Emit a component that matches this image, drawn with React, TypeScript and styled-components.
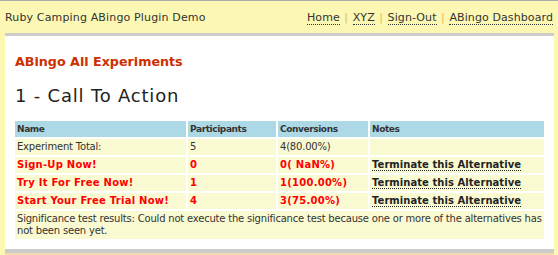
import React from "react";
import styled, { createGlobalStyle } from "styled-components";

const GlobalStyle = createGlobalStyle`
    html, body {
        margin: 0;
        padding: 0;
        background: #fcf8b3;
        font-family: "DejaVu Sans", Verdana, sans-serif;
        color: #333;
    }
`;

type Alternative = {
    name: string;
    participants: number;
    conversions: string;
};

const alternatives: Alternative[] = [
    { name: "Sign-Up Now!", participants: 0, conversions: "0( NaN%)" },
    { name: "Try It For Free Now!", participants: 1, conversions: "1(100.00%)" },
    { name: "Start Your Free Trial Now!", participants: 4, conversions: "3(75.00%)" },
];

const App: React.FunctionComponent = () => {
    return (
        <Page>
            <GlobalStyle />
            <Header>
                <Title>Ruby Camping ABingo Plugin Demo</Title>
                <Nav>
                    <NavLink href="#">Home</NavLink>
                    <Sep>|</Sep>
                    <NavLink href="#">XYZ</NavLink>
                    <Sep>|</Sep>
                    <NavLink href="#">Sign-Out</NavLink>
                    <Sep>|</Sep>
                    <NavLink href="#">ABingo Dashboard</NavLink>
                </Nav>
            </Header>
            <Content>
                <SectionTitle>ABingo All Experiments</SectionTitle>
                <ExperimentTitle>1 - Call To Action</ExperimentTitle>
                <Table>
                    <thead>
                        <tr>
                            <Th $width={167}>Name</Th>
                            <Th $width={84}>Participants</Th>
                            <Th $width={86}>Conversions</Th>
                            <Th>Notes</Th>
                        </tr>
                    </thead>
                    <tbody>
                        <tr>
                            <Td>Experiment Total:</Td>
                            <Td>5</Td>
                            <Td>4(80.00%)</Td>
                            <Td></Td>
                        </tr>
                        {alternatives.map(a => (
                            <tr key={a.name}>
                                <Td $alt>{a.name}</Td>
                                <Td $alt>{a.participants}</Td>
                                <Td $alt>{a.conversions}</Td>
                                <Td>
                                    <Terminate href="#">Terminate this Alternative</Terminate>
                                </Td>
                            </tr>
                        ))}
                        <tr>
                            <Td colSpan={4}>
                                Significance test results: Could not execute the significance test because one or more of the alternatives has not been seen yet.
                            </Td>
                        </tr>
                    </tbody>
                </Table>
            </Content>
            <Footer />
        </Page>
    );
};

const Page = styled.div`
    width: 558px;
    height: 255px;
    overflow: hidden;
    border-top: 1px solid #aaa;
    box-sizing: border-box;
`;

const Header = styled.div`
    height: 32px;
    display: flex;
    flex-direction: row;
    justify-content: space-between;
    align-items: center;
    padding: 1px 5px 0 5px;
    box-sizing: border-box;
`;

const Title = styled.div`
    font-size: 11px;
    letter-spacing: 0.15px;
    color: #333;
`;

const Nav = styled.div`
    font-size: 11px;
    letter-spacing: 0.1px;
    display: flex;
    align-items: center;
`;

const NavLink = styled.a`
    color: #333;
    text-decoration: none;
    border-bottom: 1px dotted #333;
    line-height: 13px;
`;

const Sep = styled.span`
    color: #d8b868;
    margin: 0 4.5px;
`;

const Content = styled.div`
    margin: 0 4px 0 5px;
    background: #fff;
    border-top: 3px solid #ccc;
    border-bottom: 4px solid #ccc;
    padding: 18px 8px 0 8px;
    height: 220px;
    box-sizing: border-box;
`;

const SectionTitle = styled.h2`
    margin: 0 2px;
    font-size: 12.7px;
    font-weight: bold;
    color: #cc3000;
    line-height: 16px;
`;

const ExperimentTitle = styled.h3`
    margin: 15px 2px 12px 2px;
    font-size: 18px;
    letter-spacing: 0.8px;
    font-weight: normal;
    color: #222;
    line-height: 22px;
`;

const Table = styled.table`
    width: 100%;
    border-collapse: separate;
    border-spacing: 2px;
    margin: 0;
    font-size: 10px;
`;

const Th = styled.th<{ $width?: number }>`
    width: ${p => (p.$width ? `${p.$width}px` : "auto")};
    background: #add8e6;
    text-align: left;
    font-weight: bold;
    font-size: 9px;
    letter-spacing: -0.4px;
    color: #333;
    padding: 2px 2px;
    line-height: 12px;
`;

const Td = styled.td<{ $alt?: boolean }>`
    background: #fafad2;
    padding: 2px 2px;
    line-height: 12px;
    vertical-align: top;
    color: ${p => (p.$alt ? "#f00" : "#333")};
    font-weight: ${p => (p.$alt ? "bold" : "normal")};
    letter-spacing: ${p => (p.$alt ? "0.25px" : "-0.2px")};
`;

const Terminate = styled.a`
    color: #222;
    font-weight: bold;
    letter-spacing: 0.05px;
    text-decoration: none;
    border-bottom: 1px dotted #222;
`;

const Footer = styled.div`
    margin: 0 4px 0 5px;
    height: 4px;
    background: #f8d9a8;
`;

export default App;
